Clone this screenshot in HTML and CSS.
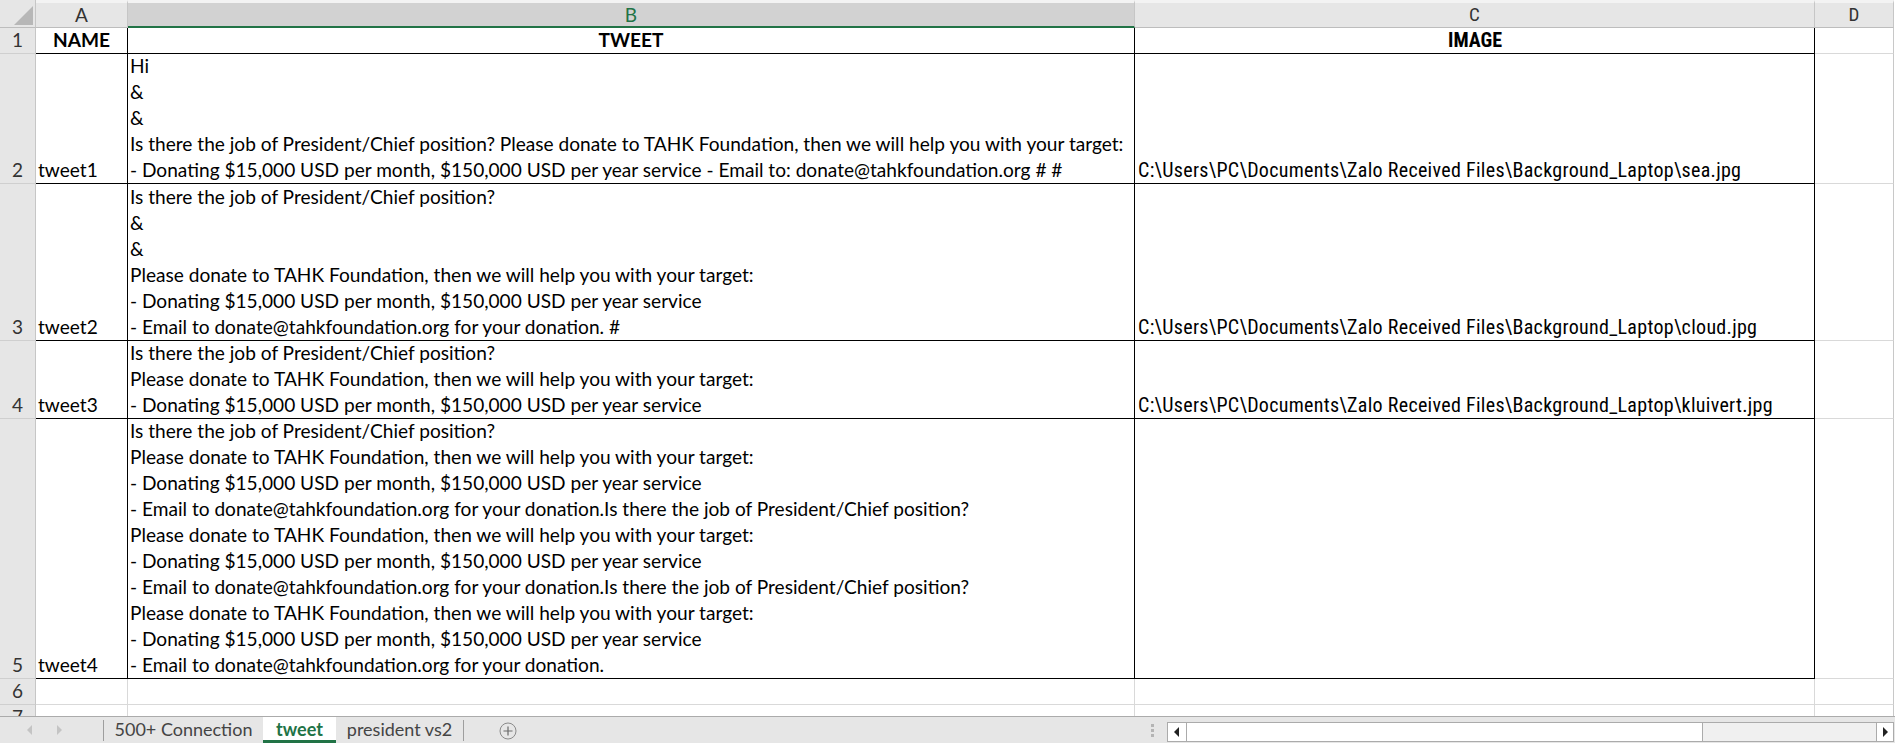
FILE: index.html
```html
<!DOCTYPE html>
<html>
<head>
<meta charset="utf-8">
<title>tweet</title>
<link rel="stylesheet" href="styles.css">
</head>
<body>
<div class="sheet">
  <div class="h corner"><svg class="tri" width="36" height="28" viewBox="0 0 36 28"><polygon points="33,6 33,25 14,25" fill="#b7b7b7"/></svg></div>
  <div class="h">A</div>
  <div class="h sel">B</div>
  <div class="h cond">C</div>
  <div class="h cond">D</div>

  <div class="r">1</div>
  <div class="c t b ctr">NAME</div>
  <div class="c t b ctr">TWEET</div>
  <div class="c t b ctr cond">IMAGE</div>
  <div class="c"></div>

  <div class="r">2</div>
  <div class="c t">tweet1</div>
  <div class="c t"><span>Hi</span><span>&amp;</span><span>&amp;</span><span>Is there the job of President/Chief position? Please donate to TAHK Foundation, then we will help you with your target:</span><span>- Donating $15,000 USD per month, $150,000 USD per year service - Email to: donate@tahkfoundation.org # #</span></div>
  <div class="c t cond">C:\Users\PC\Documents\Zalo Received Files\Background_Laptop\sea.jpg</div>
  <div class="c"></div>

  <div class="r">3</div>
  <div class="c t">tweet2</div>
  <div class="c t"><span>Is there the job of President/Chief position?</span><span>&amp;</span><span>&amp;</span><span>Please donate to TAHK Foundation, then we will help you with your target:</span><span>- Donating $15,000 USD per month, $150,000 USD per year service</span><span>- Email to donate@tahkfoundation.org for your donation. #</span></div>
  <div class="c t cond">C:\Users\PC\Documents\Zalo Received Files\Background_Laptop\cloud.jpg</div>
  <div class="c"></div>

  <div class="r">4</div>
  <div class="c t">tweet3</div>
  <div class="c t"><span>Is there the job of President/Chief position?</span><span>Please donate to TAHK Foundation, then we will help you with your target:</span><span>- Donating $15,000 USD per month, $150,000 USD per year service</span></div>
  <div class="c t cond">C:\Users\PC\Documents\Zalo Received Files\Background_Laptop\kluivert.jpg</div>
  <div class="c"></div>

  <div class="r">5</div>
  <div class="c t">tweet4</div>
  <div class="c t"><span>Is there the job of President/Chief position?</span><span>Please donate to TAHK Foundation, then we will help you with your target:</span><span>- Donating $15,000 USD per month, $150,000 USD per year service</span><span>- Email to donate@tahkfoundation.org for your donation.Is there the job of President/Chief position?</span><span>Please donate to TAHK Foundation, then we will help you with your target:</span><span>- Donating $15,000 USD per month, $150,000 USD per year service</span><span>- Email to donate@tahkfoundation.org for your donation.Is there the job of President/Chief position?</span><span>Please donate to TAHK Foundation, then we will help you with your target:</span><span>- Donating $15,000 USD per month, $150,000 USD per year service</span><span>- Email to donate@tahkfoundation.org for your donation.</span></div>
  <div class="c t"></div>
  <div class="c"></div>

  <div class="r">6</div>
  <div class="c"></div>
  <div class="c"></div>
  <div class="c"></div>
  <div class="c"></div>

  <div class="r">7</div>
  <div class="c"></div>
  <div class="c"></div>
  <div class="c"></div>
  <div class="c"></div>
</div>

<div class="tabbar">
  <div class="nav">
    <svg class="arr" width="8" height="12" viewBox="0 0 8 12"><polygon points="6,1 6,11 1,6" fill="#c4c4c4"/></svg>
    <svg class="arr" width="8" height="12" viewBox="0 0 8 12"><polygon points="2,1 2,11 7,6" fill="#c4c4c4"/></svg>
  </div>
  <div class="sep"></div>
  <div class="tab tab1">500+ Connection</div>
  <div class="tab tab2 active">tweet</div>
  <div class="tab tab3">president vs2</div>
  <div class="sep"></div>
  <div class="add"><svg width="18" height="18" viewBox="0 0 18 18"><circle cx="9" cy="9" r="8" fill="none" stroke="#8a8a8a" stroke-width="1"/><path d="M9 4.5v9M4.5 9h9" stroke="#6a6a6a" stroke-width="1.2"/></svg></div>
  <div class="spacer"></div>
  <div class="dots"><i></i><i></i><i></i></div>
  <div class="hscroll">
    <div class="sbtn left"><svg width="8" height="12" viewBox="0 0 8 12"><polygon points="6,1 6,11 1,6" fill="#222"/></svg></div>
    <div class="thumb"></div>
    <div class="track"></div>
    <div class="sbtn right"><svg width="8" height="12" viewBox="0 0 8 12"><polygon points="2,1 2,11 7,6" fill="#222"/></svg></div>
  </div>
</div>
</body>
</html>
```
FILE: styles.css
```css
* { box-sizing: border-box; }
html, body { margin: 0; padding: 0; }
body {
  width: 1895px;
  height: 743px;
  overflow: hidden;
  background: #fff;
  font-family: Lato, "Liberation Sans", sans-serif;
  color: #000;
}

.sheet {
  width: 1894px;
  height: 716px;
  overflow: hidden;
  display: grid;
  grid-template-columns: 36px 92px 1007px 680px 79px;
  grid-template-rows: 28px 26px 130px 157px 78px 260px 26px 26px;
}

/* column headers */
.h {
  background: #e6e6e6;
  border-top: 3px solid #f3f3f3;
  border-right: 1px solid #c6c6c6;
  border-bottom: 1px solid #bdbdbd;
  color: #333;
  font-size: 19px;
  display: flex;
  align-items: center;
  justify-content: center;
  line-height: 24px;
}
.h.sel {
  background: #d2d2d2;
  color: #217346;
  border-bottom: 2px solid #217346;
}
.h.corner {
  border-top: none;
  position: relative;
}
.h.corner .tri { position: absolute; left: 0; top: 0; }
.h:last-child { border-right-color: #c8c8c8; }

/* row headers */
.r {
  background: #e6e6e6;
  border-right: 1px solid #c6c6c6;
  border-bottom: 1px solid #cfcfcf;
  color: #333;
  font-size: 19px;
  line-height: 26px;
  display: flex;
  align-items: flex-end;
  justify-content: center;
  overflow: hidden;
}

/* cells */
.c {
  border-right: 1px solid #d9d9d9;
  border-bottom: 1px solid #d9d9d9;
  font-size: 19.1px;
  line-height: 26px;
  padding: 0 2px;
  display: flex;
  flex-direction: column;
  justify-content: flex-end;
  white-space: pre;
  overflow: hidden;
}
.c span { display: block; height: 26px; }
.c:nth-child(5n) { border-right-color: #c8c8c8; }
.c.t { border-right-color: #000; border-bottom-color: #000; }
.c.b { font-weight: 700; }
.c.ctr { align-items: center; }

.cond {
  font-family: Roboto, "Liberation Sans", sans-serif;
  font-stretch: condensed;
}
.c.cond { font-size: 20px; letter-spacing: 0.3px; padding-left: 3px; }
.c.b.cond { letter-spacing: 0; }

/* sheet tab bar */
.tabbar {
  height: 27px;
  background: #e6e6e6;
  border-top: 1px solid #ababab;
  display: flex;
  align-items: stretch;
  font-size: 18px;
  color: #444;
}
.nav {
  width: 103px;
  display: flex;
  align-items: center;
  padding-left: 26px;
  gap: 21px;
}
.sep {
  width: 1px;
  background: #9e9e9e;
  margin: 3px 0 2px;
}
.tab {
  display: flex;
  align-items: center;
  justify-content: center;
  padding-bottom: 2px;
}
.tab1 { width: 159px; }
.tab2 { width: 73px; }
.tab3 { width: 127px; }
.tab.active {
  background: #fff;
  color: #217346;
  font-weight: 700;
  border-bottom: 3px solid #217346;
  padding-bottom: 0;
}
.add {
  display: flex;
  align-items: center;
  padding-left: 35px;
  padding-top: 2px;
}
.spacer { flex: 1; }
.dots {
  display: flex;
  flex-direction: column;
  justify-content: center;
  gap: 2px;
  margin-right: 13px;
}
.dots i {
  display: block;
  width: 3px;
  height: 3px;
  background: #b4b4b4;
}
.hscroll {
  width: 727px;
  margin: 5px 1px 1px 0;
  border: 1px solid #ababab;
  background: #f0f0f0;
  display: flex;
}
.sbtn {
  background: #fff;
  display: flex;
  align-items: center;
  justify-content: center;
}
.sbtn.left { width: 19px; border-right: 1px solid #ababab; }
.sbtn.right { width: 17px; border-left: 1px solid #ababab; }
.thumb {
  width: 516px;
  background: #fff;
  border-right: 1px solid #ababab;
}
.track { flex: 1; }
```
